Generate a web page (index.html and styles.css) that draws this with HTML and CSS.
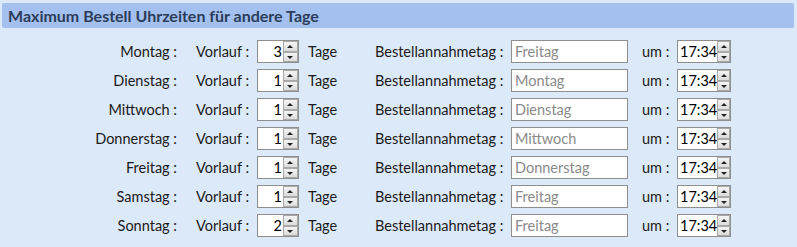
FILE: index.html
```html
<!DOCTYPE html>
<html lang="de">
<head>
  <meta charset="UTF-8" />
  <title>Maximum Bestell Uhrzeiten</title>
  <link rel="stylesheet" href="styles.css">
</head>
<body>
  <div class="panel">
    <div class="title-bar">Maximum Bestell Uhrzeiten für andere Tage</div>

    <div class="rows">
      <div class="row">
        <span class="day">Montag :</span>
        <span class="lbl">Vorlauf :</span>
        <div class="spin num"><span class="val">3</span><span class="arrows"><i class="up"></i><i class="down"></i></span></div>
        <span class="unit">Tage</span>
        <span class="lbl">Bestellannahmetag :</span>
        <div class="field">Freitag</div>
        <span class="lbl um">um :</span>
        <div class="spin time"><span class="val">17:34</span><span class="arrows"><i class="up"></i><i class="down"></i></span></div>
      </div>
      <div class="row">
        <span class="day">Dienstag :</span>
        <span class="lbl">Vorlauf :</span>
        <div class="spin num"><span class="val">1</span><span class="arrows"><i class="up"></i><i class="down"></i></span></div>
        <span class="unit">Tage</span>
        <span class="lbl">Bestellannahmetag :</span>
        <div class="field">Montag</div>
        <span class="lbl um">um :</span>
        <div class="spin time"><span class="val">17:34</span><span class="arrows"><i class="up"></i><i class="down"></i></span></div>
      </div>
      <div class="row">
        <span class="day">Mittwoch :</span>
        <span class="lbl">Vorlauf :</span>
        <div class="spin num"><span class="val">1</span><span class="arrows"><i class="up"></i><i class="down"></i></span></div>
        <span class="unit">Tage</span>
        <span class="lbl">Bestellannahmetag :</span>
        <div class="field">Dienstag</div>
        <span class="lbl um">um :</span>
        <div class="spin time"><span class="val">17:34</span><span class="arrows"><i class="up"></i><i class="down"></i></span></div>
      </div>
      <div class="row">
        <span class="day">Donnerstag :</span>
        <span class="lbl">Vorlauf :</span>
        <div class="spin num"><span class="val">1</span><span class="arrows"><i class="up"></i><i class="down"></i></span></div>
        <span class="unit">Tage</span>
        <span class="lbl">Bestellannahmetag :</span>
        <div class="field">Mittwoch</div>
        <span class="lbl um">um :</span>
        <div class="spin time"><span class="val">17:34</span><span class="arrows"><i class="up"></i><i class="down"></i></span></div>
      </div>
      <div class="row">
        <span class="day">Freitag :</span>
        <span class="lbl">Vorlauf :</span>
        <div class="spin num"><span class="val">1</span><span class="arrows"><i class="up"></i><i class="down"></i></span></div>
        <span class="unit">Tage</span>
        <span class="lbl">Bestellannahmetag :</span>
        <div class="field">Donnerstag</div>
        <span class="lbl um">um :</span>
        <div class="spin time"><span class="val">17:34</span><span class="arrows"><i class="up"></i><i class="down"></i></span></div>
      </div>
      <div class="row">
        <span class="day">Samstag :</span>
        <span class="lbl">Vorlauf :</span>
        <div class="spin num"><span class="val">1</span><span class="arrows"><i class="up"></i><i class="down"></i></span></div>
        <span class="unit">Tage</span>
        <span class="lbl">Bestellannahmetag :</span>
        <div class="field">Freitag</div>
        <span class="lbl um">um :</span>
        <div class="spin time"><span class="val">17:34</span><span class="arrows"><i class="up"></i><i class="down"></i></span></div>
      </div>
      <div class="row">
        <span class="day">Sonntag :</span>
        <span class="lbl">Vorlauf :</span>
        <div class="spin num"><span class="val">2</span><span class="arrows"><i class="up"></i><i class="down"></i></span></div>
        <span class="unit">Tage</span>
        <span class="lbl">Bestellannahmetag :</span>
        <div class="field">Freitag</div>
        <span class="lbl um">um :</span>
        <div class="spin time"><span class="val">17:34</span><span class="arrows"><i class="up"></i><i class="down"></i></span></div>
      </div>
    </div>
  </div>
</body>
</html>
```

FILE: styles.css
```css
/* Page and panel */
body {
  margin: 0;
  background-color: #dce9f8;
  font-family: "Lato", "Open Sans", sans-serif;
  font-size: 14.5px;
  color: #1a1a1a;
}

.panel {
  width: 797px;
  height: 247px;
  padding-top: 3px;
  box-sizing: border-box;
}

.title-bar {
  margin: 0 3px 0 2px;
  height: 25px;
  line-height: 25px;
  padding-left: 6px;
  background-color: #a4c0ee;
  border-radius: 2px;
  color: #2a3d5a;
  font-weight: bold;
  font-size: 16px;
}

/* Rows */
.rows {
  margin-top: 12px;
  display: flex;
  flex-direction: column;
  gap: 6px;
}

.row {
  display: grid;
  grid-template-columns: 196px 61px 42px 76px 136px 117px 49px 54px;
  align-items: center;
  height: 23px;
}

.day {
  text-align: right;
  padding-right: 19px;
}

.unit {
  padding-left: 9px;
}

.um {
  padding-left: 14px;
}

/* Inputs */
.field,
.spin {
  height: 23px;
  box-sizing: border-box;
  border: 1px solid #8e8e8e;
  background: #fff;
}

.field {
  color: #8a8a8a;
  padding-left: 3px;
  line-height: 21px;
}

.spin {
  display: flex;
}

.spin .val {
  flex: 1;
  line-height: 21px;
  color: #000;
}

.num .val {
  text-align: right;
  padding-right: 1px;
}

.time .val {
  padding-left: 2px;
}

.arrows {
  width: 15px;
  display: flex;
  flex-direction: column;
}

.arrows i {
  flex: 1;
  position: relative;
  border: 1px solid #a9a9a9;
  background: linear-gradient(#f4f4f4, #dcdcdc);
}

.arrows i::after {
  content: "";
  position: absolute;
  left: 3px;
  top: 3px;
  border-left: 3px solid transparent;
  border-right: 3px solid transparent;
}

.arrows .up::after {
  border-bottom: 3px solid #222;
}

.arrows .down::after {
  border-top: 3px solid #222;
}
```
